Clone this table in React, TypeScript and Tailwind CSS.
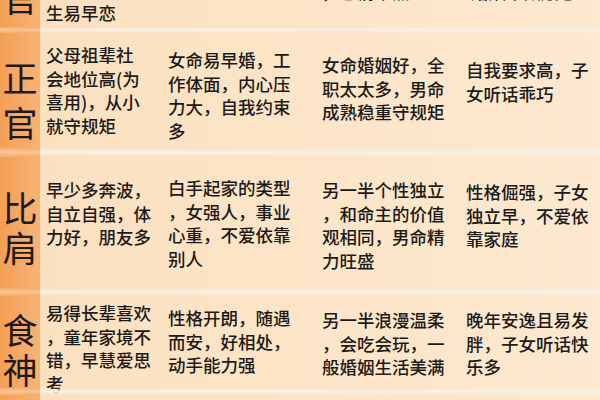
type Cell = { lines: string[]; pt: number };
type Row = {
  h: string;
  big: string[];
  bigCls: string;
  cells: Cell[];
};

const cellPad = ['pl-[6px] w-[124px]', 'pl-[4px] w-[154px]', 'pl-[4px] w-[144px]', 'pl-[4px] flex-1'];

const ptCls: Record<number, string> = {
  5: 'pt-[5px]',
  10: 'pt-[10px]',
  12: 'pt-[12px]',
  15: 'pt-[15px]',
  19: 'pt-[19px]',
  20: 'pt-[20px]',
  21: 'pt-[21px]',
  23: 'pt-[23px]',
  25: 'pt-[25px]',
};

const rows: Row[] = [
  {
    h: 'h-[115px]',
    big: ['正', '官'],
    bigCls: 'pt-[21px] leading-[45px]',
    cells: [
      { lines: ['父母祖辈社', '会地位高(为', '喜用)，从小', '就守规矩'], pt: 10 },
      { lines: ['女命易早婚，工', '作体面，内心压', '力大，自我约束', '多'], pt: 15 },
      { lines: ['女命婚姻好，全', '职太太多，男命', '成熟稳重守规矩'], pt: 20 },
      { lines: ['自我要求高，子', '女听话乖巧'], pt: 25 },
    ],
  },
  {
    h: 'h-[131px]',
    big: ['比', '肩'],
    bigCls: 'pt-[30px] leading-[40px]',
    cells: [
      { lines: ['早少多奔波，', '自立自强，体', '力好，朋友多'], pt: 21 },
      { lines: ['白手起家的类型', '，女强人，事业', '心重，不爱依靠', '别人'], pt: 19 },
      { lines: ['另一半个性独立', '，和命主的价值', '观相同，男命精', '力旺盛'], pt: 21 },
      { lines: ['性格倔强，子女', '独立早，不爱依', '靠家庭'], pt: 23 },
    ],
  },
  {
    h: 'h-[92px]',
    big: ['食', '神'],
    bigCls: 'pt-[13px] leading-[40px]',
    cells: [
      { lines: ['易得长辈喜欢', '，童年家境不', '错，早慧爱思', '考'], pt: 5 },
      { lines: ['性格开朗，随遇', '而安，好相处，', '动手能力强'], pt: 10 },
      { lines: ['另一半浪漫温柔', '，会吃会玩，一', '般婚姻生活美满'], pt: 12 },
      { lines: ['晚年安逸且易发', '胖，子女听话快', '乐多'], pt: 12 },
    ],
  },
];

const Sep = ({ h }: { h: string }) => (
  <div className={`flex ${h}`}>
    <div className="w-[40px] bg-gradient-to-b from-[#f6ad6a] via-[#f9c596] to-[#f6ad6a]" />
    <div className="flex-1 bg-gradient-to-b from-transparent via-[#f7f0e6] to-transparent" />
  </div>
);

const RowView = ({ row }: { row: Row }) => (
  <div className={`flex ${row.h}`}>
    <div
      className={`w-[40px] flex flex-col items-center bg-gradient-to-r from-[#f39f55] to-[#f7b374] text-[35px] font-normal text-[#1d1a17] ${row.bigCls}`}
    >
      {row.big.map((c) => (
        <div key={c}>{c}</div>
      ))}
    </div>
    {row.cells.map((cell, i) => (
      <div key={i} className={`${cellPad[i]} ${ptCls[cell.pt]}`}>
        {cell.lines.map((l, j) => (
          <div key={j} className="whitespace-nowrap leading-[23.5px]">
            {l}
          </div>
        ))}
      </div>
    ))}
  </div>
);

export default function App() {
  return (
    <div className="w-[600px] h-[400px] overflow-hidden bg-gradient-to-r from-[#fbe0bf] to-[#fde9d0] font-['Noto_Sans_CJK_SC',sans-serif] text-[17.5px] font-medium text-[#1c1a18]">
      {/* top row, mostly scrolled off */}
      <div className="flex h-[27px] overflow-hidden">
        <div className="w-[40px] flex flex-col justify-end items-center pb-[11px] bg-gradient-to-r from-[#f39f55] to-[#f7b374] text-[35px] leading-[38px] font-normal">
          <div>官</div>
        </div>
        <div className="w-[124px] pl-[6px] flex flex-col justify-end pb-[3px]">
          <div className="whitespace-nowrap leading-[23.5px]">生易早恋</div>
        </div>
        <div className="w-[154px] pl-[4px]" />
        <div className="w-[144px] pl-[4px] flex flex-col justify-end pb-[24px]">
          <div className="whitespace-nowrap leading-[23.5px]">，感情早熟</div>
        </div>
        <div className="flex-1 pl-[4px] flex flex-col justify-end pb-[24px]">
          <div className="whitespace-nowrap leading-[23.5px] pl-[5px]">婚姻不太顺心</div>
        </div>
      </div>
      <Sep h="h-[6px]" />
      <RowView row={rows[0]} />
      <Sep h="h-[9px]" />
      <RowView row={rows[1]} />
      <Sep h="h-[8px]" />
      <RowView row={rows[2]} />
      <Sep h="h-[7px]" />
      <div className="flex h-[10px]">
        <div className="w-[40px] bg-gradient-to-r from-[#f39f55] to-[#f7b374]" />
        <div className="flex-1" />
      </div>
    </div>
  );
}
